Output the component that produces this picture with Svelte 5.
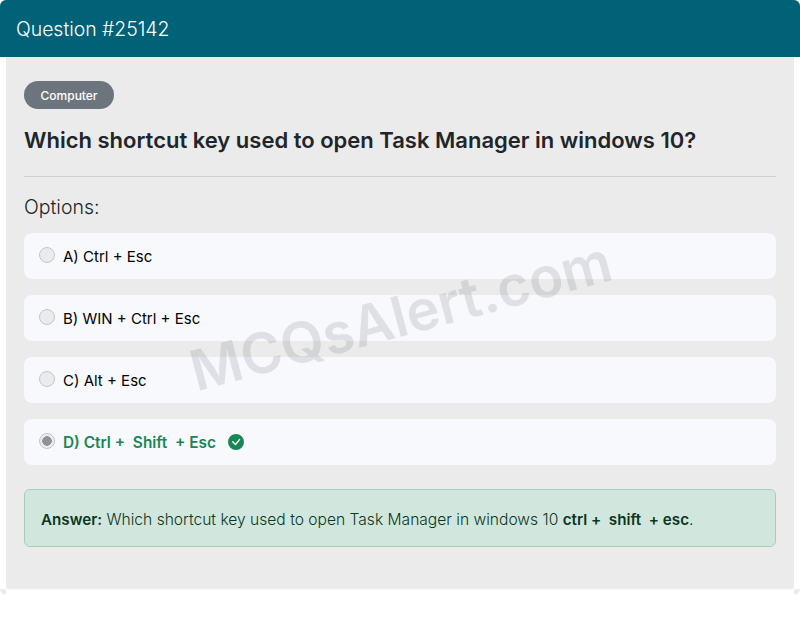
<script>
	let options = [
		{ label: 'A) Ctrl + Esc' },
		{ label: 'B) WIN + Ctrl + Esc' },
		{ label: 'C) Alt + Esc' },
		{ label: 'D) Ctrl +\u00a0 Shift\u00a0 + Esc', correct: true }
	];
</script>

<div class="card">
	<header class="card-header">Question #25142</header>
	<div class="card-body">
		<span class="badge">Computer</span>
		<h1>Which shortcut key used to open Task Manager in windows 10?</h1>
		<hr />
		<h2>Options:</h2>
		<ul>
			{#each options as opt}
				<li class:correct={opt.correct}>
					<span class="radio" class:checked={opt.correct}></span>
					<span>{opt.label}</span>
					{#if opt.correct}
						<svg class="check" viewBox="0 0 16 16" width="16" height="16">
							<path fill="#198754" d="M16 8A8 8 0 1 1 0 8a8 8 0 0 1 16 0zm-3.97-3.03a.75.75 0 0 0-1.08.02L7.477 9.417 5.384 7.323a.75.75 0 0 0-1.06 1.06L6.97 11.03a.75.75 0 0 0 1.079-.02l3.992-4.99a.75.75 0 0 0-.01-1.05z" />
						</svg>
					{/if}
				</li>
			{/each}
		</ul>
		<div class="answer">
			<strong>Answer:</strong> Which shortcut key used to open Task Manager in windows 10 <strong>ctrl +&nbsp; shift&nbsp; + esc</strong>.
		</div>
		<div class="watermark">MCQsAlert.com</div>
	</div>
	<div class="card-foot"></div>
</div>

<style>
	:global(body) {
		margin: 0;
		background: #fff;
		font-family: "Inter", "Lato", sans-serif;
		color: #212529;
	}

	.card {
		width: 800px;
		background: #ebebeb;
		border-radius: 6px;
		overflow: hidden;
	}

	.card-header {
		height: 57px;
		box-sizing: border-box;
		background: #006177;
		color: #fff;
		font-size: 19.4px;
		font-weight: 300;
		line-height: 58px;
		padding-left: 16px;
	}

	.card-body {
		position: relative;
		height: 532px;
		box-sizing: border-box;
		padding: 24px 18px 0;
		background: #ebebeb;
		border-left: 6px solid #fff;
		border-right: 6px solid #fff;
		overflow: hidden;
	}

	.card-foot {
		height: 6px;
		margin: 0 6px;
		background: #fff;
	}

	.badge {
		display: block;
		width: 90px;
		height: 28px;
		box-sizing: border-box;
		border-radius: 14px;
		background: #6c757d;
		color: #fff;
		font-size: 12px;
		font-weight: 500;
		line-height: 30px;
		text-align: center;
	}

	h1 {
		margin: 17px 0 0;
		font-size: 22px;
		font-weight: 600;
		line-height: 28px;
	}

	hr {
		margin: 22px 0 0;
		border: 0;
		border-top: 1px solid #cfcfcf;
	}

	h2 {
		margin: 17px 0 0;
		font-size: 19.5px;
		font-weight: 300;
		line-height: 26px;
	}

	ul {
		list-style: none;
		margin: 13px 0 0;
		padding: 0;
		display: flex;
		flex-direction: column;
		gap: 16px;
	}

	li {
		height: 46px;
		display: flex;
		align-items: center;
		gap: 8px;
		padding-left: 15px;
		background: #f8f9fd;
		border-radius: 8px;
		font-size: 15px;
		color: #000;
	}

	li.correct {
		color: #198754;
		font-size: 15.4px;
		font-weight: 600;
	}

	.radio {
		width: 16px;
		height: 16px;
		box-sizing: border-box;
		border-radius: 50%;
		border: 1px solid #c4c6c9;
		background: #e9ecef;
		margin-top: -3px;
	}

	.radio.checked {
		background: radial-gradient(circle, #8f9193 0 4.5px, #e9ecef 5px);
	}

	.check {
		margin-left: 4px;
	}

	.answer {
		margin-top: 24px;
		height: 58px;
		box-sizing: border-box;
		padding-left: 16px;
		line-height: 60px;
		background: #d1e7dd;
		border: 1px solid #a3cfbb;
		border-radius: 6px;
		color: #0a3622;
		font-size: 15.6px;
		font-weight: 300;
	}

	.answer strong {
		font-size: 15.2px;
		font-weight: 600;
	}

	.watermark {
		position: absolute;
		left: 178px;
		top: 225px;
		transform: rotate(-15deg);
		font-size: 56px;
		font-weight: 600;
		color: rgba(110, 115, 125, 0.19);
		white-space: nowrap;
		pointer-events: none;
	}
</style>
